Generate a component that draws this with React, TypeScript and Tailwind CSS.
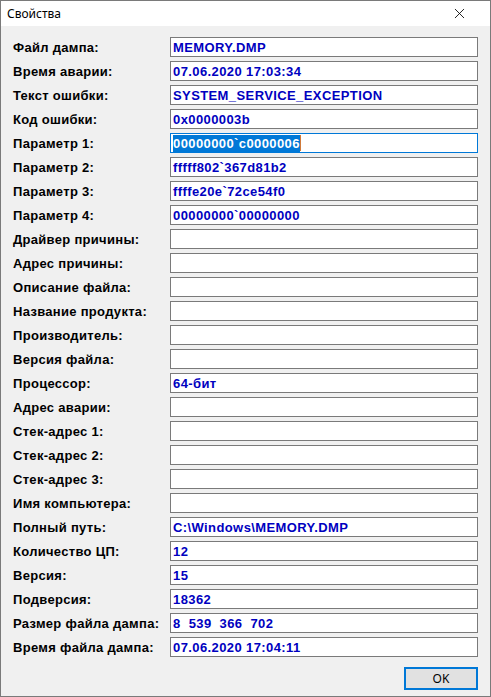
import { X } from "lucide-react";

const rows: [string, string][] = [
  ["Файл дампа:", "MEMORY.DMP"],
  ["Время аварии:", "07.06.2020 17:03:34"],
  ["Текст ошибки:", "SYSTEM_SERVICE_EXCEPTION"],
  ["Код ошибки:", "0x0000003b"],
  ["Параметр 1:", "00000000`c0000006"],
  ["Параметр 2:", "fffff802`367d81b2"],
  ["Параметр 3:", "ffffe20e`72ce54f0"],
  ["Параметр 4:", "00000000`00000000"],
  ["Драйвер причины:", ""],
  ["Адрес причины:", ""],
  ["Описание файла:", ""],
  ["Название продукта:", ""],
  ["Производитель:", ""],
  ["Версия файла:", ""],
  ["Процессор:", "64-бит"],
  ["Адрес аварии:", ""],
  ["Стек-адрес 1:", ""],
  ["Стек-адрес 2:", ""],
  ["Стек-адрес 3:", ""],
  ["Имя компьютера:", ""],
  ["Полный путь:", "C:\\Windows\\MEMORY.DMP"],
  ["Количество ЦП:", "12"],
  ["Версия:", "15"],
  ["Подверсия:", "18362"],
  ["Размер файла дампа:", "8  539  366  702"],
  ["Время файла дампа:", "07.06.2020 17:04:11"],
];

const App = () => {
  return (
    <div className="w-[491px] h-[697px] flex flex-col border border-[#7a7a7a] bg-[#f0f0f0] font-['Liberation_Sans',Arial,sans-serif]">
      <div className="h-[25px] bg-white flex items-center justify-between pl-[6px] pr-[22px] shrink-0">
        <span className="text-[12px] text-black font-['Noto_Sans',sans-serif]">Свойства</span>
        <X size={17} strokeWidth={1.2} className="text-black" />
      </div>
      <div className="flex flex-col gap-[4px] pt-[11px] pl-[12px] pr-[12px]">
        {rows.map(([label, value], i) => (
          <div key={label} className="flex items-center h-[20px]">
            <span className="w-[157px] text-[13px] tracking-[0.3px] font-bold text-black whitespace-pre leading-none">
              {label}
            </span>
            <div
              className={
                "flex-1 h-[20px] bg-white border flex items-center px-[2px] text-[13px] tracking-[0.4px] font-bold text-[#0000c0] whitespace-pre leading-none " +
                (i === 4 ? "border-[#0078d7]" : "border-[#7a7a7a]")
              }
            >
              {i === 4 ? (
                <>
                  <span className="bg-[#0078d7] text-white py-[2px]">{value}</span>
                  <span className="w-[1px] h-[16px] bg-[#d07a3a]" />
                </>
              ) : (
                value
              )}
            </div>
          </div>
        ))}
      </div>
      <div className="flex justify-end pr-[12px] pt-[10px]">
        <button className="w-[74px] h-[23px] border-2 border-[#0078d7] bg-[#e1e1e1] text-[12px] text-black font-['Noto_Sans',sans-serif] leading-none">
          OK
        </button>
      </div>
    </div>
  );
};

export default App;
